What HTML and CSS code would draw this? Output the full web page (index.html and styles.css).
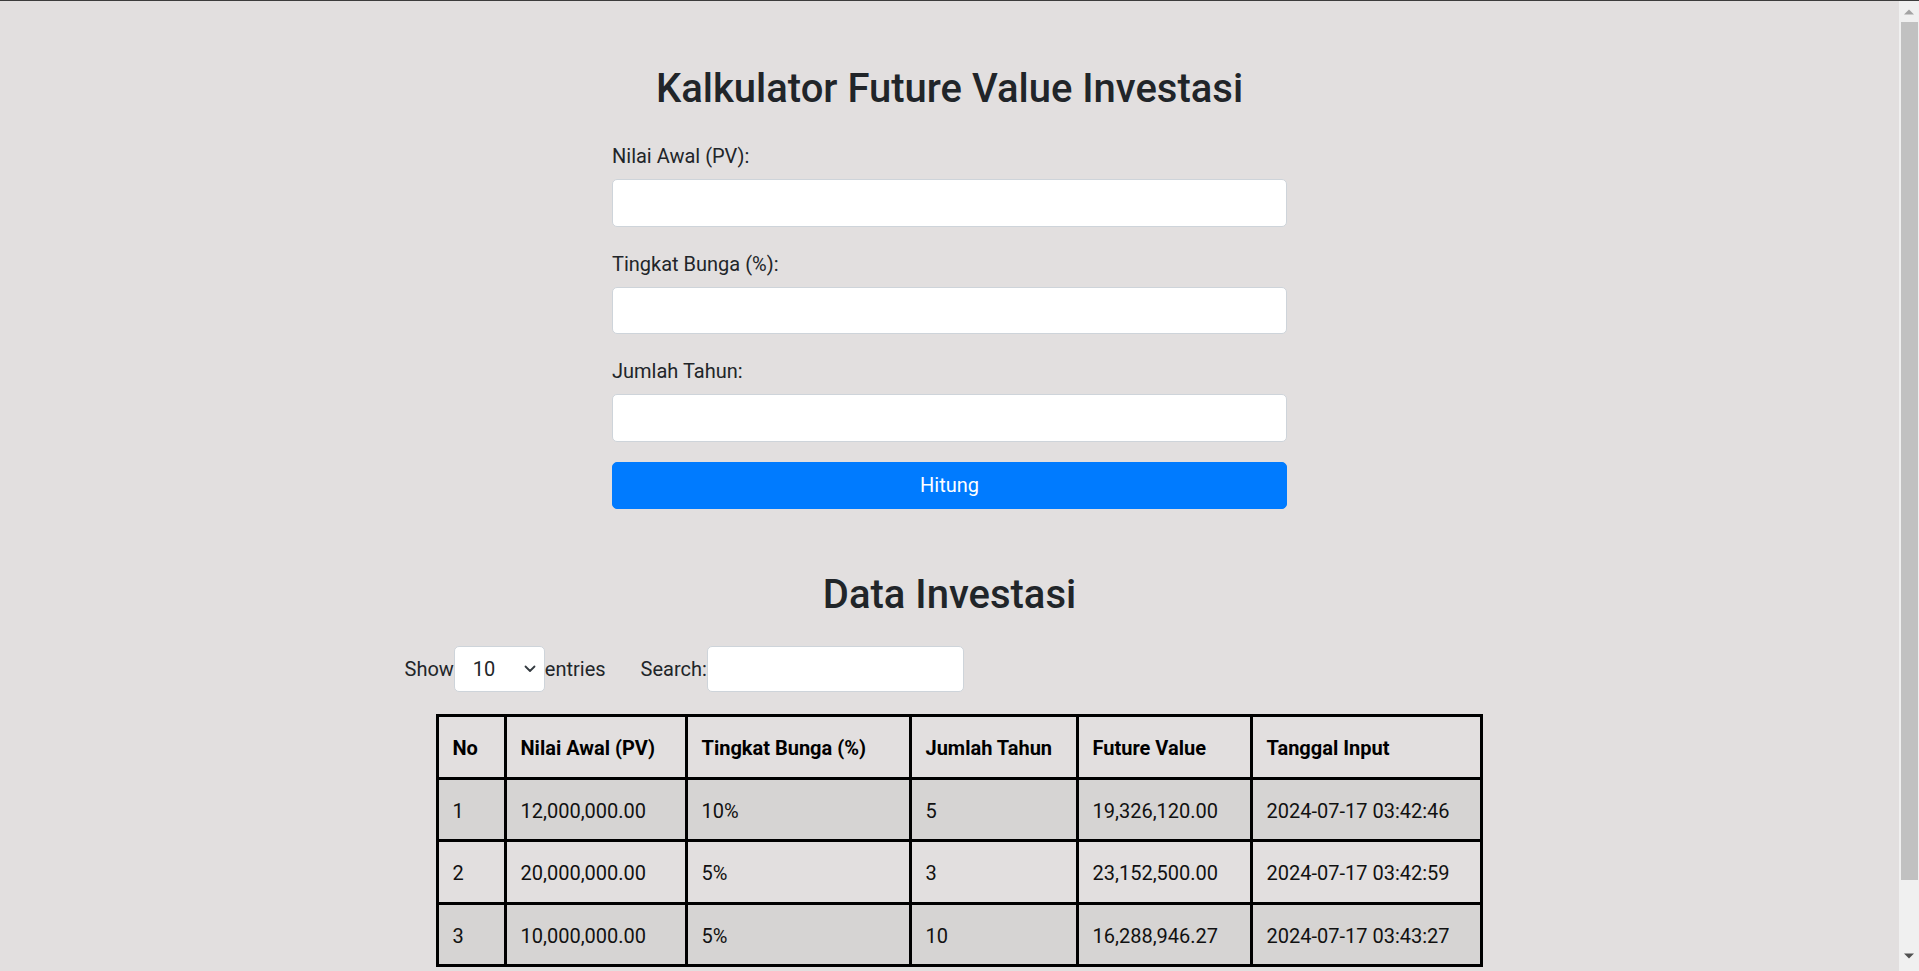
FILE: index.html
```html
<!DOCTYPE html>
<html lang="id">
<head>
<meta charset="utf-8">
<title>Kalkulator Future Value Investasi</title>
<link rel="stylesheet" href="styles.css">
</head>
<body>
<div class="topline"></div>
<div class="viewport">
  <div class="page">
    <main class="container">
      <h1 class="heading">Kalkulator Future Value Investasi</h1>
      <form class="calc">
        <div class="group">
          <label class="label" for="pv">Nilai Awal (PV):</label>
          <input class="field" id="pv" type="text">
        </div>
        <div class="group">
          <label class="label" for="rate">Tingkat Bunga (%):</label>
          <input class="field" id="rate" type="text">
        </div>
        <div class="group">
          <label class="label" for="years">Jumlah Tahun:</label>
          <input class="field" id="years" type="text">
        </div>
        <button class="btn" type="button">Hitung</button>
      </form>
      <h2 class="heading heading-data">Data Investasi</h2>
    </main>
    <section class="data">
      <div class="controls">
        <label class="length">Show
          <span class="select-wrap">
            <select class="select"><option>10</option><option>25</option><option>50</option><option>100</option></select>
            <svg class="chevron" width="12" height="8" viewBox="0 0 12 8"><path d="M1.5 1.5 6 6l4.5-4.5" fill="none" stroke="#343a40" stroke-width="1.8" stroke-linecap="round" stroke-linejoin="round"/></svg>
          </span>entries</label>
        <label class="filter">Search:<input class="search" type="search"></label>
      </div>
      <table class="grid">
        <colgroup>
          <col class="c-no"><col class="c-pv"><col class="c-rate"><col class="c-years"><col class="c-fv"><col class="c-date">
        </colgroup>
        <thead>
          <tr><th>No</th><th>Nilai Awal (PV)</th><th>Tingkat Bunga (%)</th><th>Jumlah Tahun</th><th>Future Value</th><th>Tanggal Input</th></tr>
        </thead>
        <tbody>
          <tr class="odd"><td>1</td><td>12,000,000.00</td><td>10%</td><td>5</td><td>19,326,120.00</td><td>2024-07-17 03:42:46</td></tr>
          <tr><td>2</td><td>20,000,000.00</td><td>5%</td><td>3</td><td>23,152,500.00</td><td>2024-07-17 03:42:59</td></tr>
          <tr class="odd"><td>3</td><td>10,000,000.00</td><td>5%</td><td>10</td><td>16,288,946.27</td><td>2024-07-17 03:43:27</td></tr>
        </tbody>
      </table>
    </section>
  </div>
  <div class="scrollbar" aria-hidden="true">
    <div class="sb-btn"><svg width="10" height="6" viewBox="0 0 10 6"><path d="M0 5.5 5 0.5l5 5z" fill="#a3a3a3"/></svg></div>
    <div class="sb-track"><div class="sb-thumb"></div></div>
    <div class="sb-btn sb-btn-down"><svg width="10" height="6" viewBox="0 0 10 6"><path d="M0 0.5 5 5.5l5-5z" fill="#505050"/></svg></div>
  </div>
</div>
</body>
</html>
```
FILE: styles.css
```css
html, body {
  height: 100%;
}
body {
  margin: 0;
  overflow: hidden;
  display: flex;
  flex-direction: column;
  background: #e2dfdf;
  color: #212529;
  font-family: "Segoe UI", Roboto, "Liberation Sans", sans-serif;
  font-size: 20px;
  line-height: 30px;
}
.topline {
  flex: none;
  height: 1px;
  background: #3c3c3c;
}
.viewport {
  flex: 1;
  min-height: 0;
  display: flex;
}
.page {
  flex: 1;
  min-width: 0;
  overflow: hidden;
}
.container {
  width: 675px;
  margin: 0 auto;
}
.heading {
  margin: 64px 0 26px;
  font-size: 40px;
  line-height: 48px;
  font-weight: 500;
  text-align: center;
}
.heading-data {
  margin-top: 62px;
  margin-bottom: 27px;
}
.calc {
  display: flex;
  flex-direction: column;
}
.group {
  display: flex;
  flex-direction: column;
  margin-bottom: 20px;
}
.label {
  padding-top: 2px;
  margin-bottom: 8px;
}
.field {
  box-sizing: border-box;
  height: 47.5px;
  padding: 7px 15px;
  border: 1px solid #ced4da;
  border-radius: 5px;
  background: #fff;
  font: inherit;
}
.btn {
  height: 47.5px;
  border: 1px solid #007bff;
  border-radius: 5px;
  background: #007bff;
  color: #fff;
  font: inherit;
  padding: 0;
}
.data {
  width: 1090px;
  margin: 0 auto;
}
.controls {
  display: flex;
  align-items: center;
  gap: 35px;
  height: 46px;
}
.length, .filter {
  display: flex;
  align-items: center;
}
.select-wrap {
  position: relative;
  display: inline-flex;
}
.select {
  box-sizing: border-box;
  width: 91px;
  height: 46px;
  padding: 0 30px 0 18px;
  border: 1px solid #ced4da;
  border-radius: 5px;
  background: #fff;
  color: #212529;
  font: inherit;
  appearance: none;
  -webkit-appearance: none;
}
.chevron {
  position: absolute;
  right: 9px;
  top: 19px;
  pointer-events: none;
}
.search {
  box-sizing: border-box;
  width: 257px;
  height: 46px;
  border: 1px solid #ced4da;
  border-radius: 5px;
  background: #fff;
  font: inherit;
  padding: 0 8px;
}
.grid {
  table-layout: fixed;
  width: 1044px;
  margin: 22px 0 0 31px;
  border-collapse: collapse;
  border: 3px solid #000;
  color: #111;
}
.c-no { width: 68px; }
.c-pv { width: 181px; }
.c-rate { width: 224px; }
.c-years { width: 167px; }
.c-fv { width: 174px; }
.c-date { width: 230px; }
.grid th, .grid td {
  border: 3px solid #000;
  padding: 16px 14px 13.6px;
  text-align: left;
  white-space: nowrap;
}
.grid th {
  font-weight: 700;
  color: #000;
}
.grid .odd td {
  background: #d6d4d3;
}

.scrollbar {
  flex: none;
  width: 20px;
  display: flex;
  flex-direction: column;
  background: #f0f0f0;
}
.sb-btn {
  flex: none;
  height: 21px;
  display: flex;
  align-items: center;
  justify-content: center;
}
.sb-btn-down {
  align-items: flex-start;
  padding-top: 3px;
  height: 18px;
}
.sb-track {
  flex: 1;
  padding: 0 1px 0 2px;
}
.sb-thumb {
  height: 858px;
  background: #c1c1c1;
}
```
